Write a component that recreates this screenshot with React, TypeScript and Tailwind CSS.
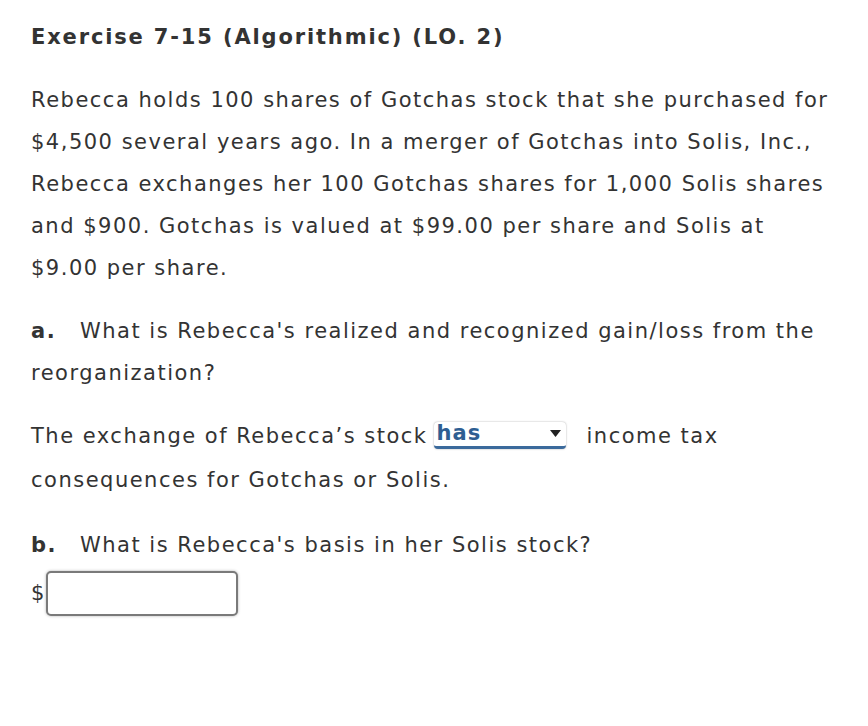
export default function App() {
  return (
    <div
      className="min-h-screen bg-white pl-[31px] pr-2 pt-[23px] text-[#333333] text-[21px] tracking-[1.5px] whitespace-nowrap"
      style={{ fontFamily: '"DejaVu Sans", Verdana, sans-serif' }}
    >
      <h1 className="font-bold text-[21px] leading-[28px] tracking-[1.85px]">Exercise 7-15 (Algorithmic) (LO. 2)</h1>

      <p className="mt-[28px] leading-[42px]">
        Rebecca holds 100 shares of Gotchas stock that she purchased for
        <br />
        $4,500 several years ago. In a merger of Gotchas into Solis, Inc.,
        <br />
        Rebecca exchanges her 100 Gotchas shares for 1,000 Solis shares
        <br />
        and $900. Gotchas is valued at $99.00 per share and Solis at
        <br />
        $9.00 per share.
      </p>

      <p className="mt-[21px] leading-[42px]">
        <span className="inline-block w-[49px] font-bold">a.</span>
        What is Rebecca's realized and recognized gain/loss from the
        <br />
        reorganization?
      </p>

      <p className="mt-[20px] leading-[44px]">
        The exchange of Rebecca’s stock
        <span className="inline-flex items-center justify-between align-middle w-[132px] h-[27px] ml-[6px] mr-[21px] -mt-[4px] bg-white rounded-[4px] shadow-[0_0_2px_rgba(0,0,0,0.35)] border-b-[3px] border-[#3b6a9c] pl-[3px] pr-[5px] tracking-[1px]">
          <span className="font-bold text-[#2e5e92] leading-none">has</span>
          <svg width="11" height="7" viewBox="0 0 11 7">
            <path d="M0 0h11L5.5 7z" fill="#222" />
          </svg>
        </span>
        income tax
        <br />
        consequences for Gotchas or Solis.
      </p>

      <p className="mt-[22px] leading-[42px]">
        <span className="inline-block w-[49px] font-bold">b.</span>
        What is Rebecca's basis in her Solis stock?
      </p>

      <div className="flex items-center mt-[5px]">
        <span className="leading-none w-[15px] tracking-normal">$</span>
        <input
          className="w-[192px] h-[45px] border-2 border-[#7a7a7a] rounded-[5px] bg-white shadow-[0_0_3px_rgba(0,0,0,0.3)] outline-none"
          type="text"
        />
      </div>
    </div>
  );
}
